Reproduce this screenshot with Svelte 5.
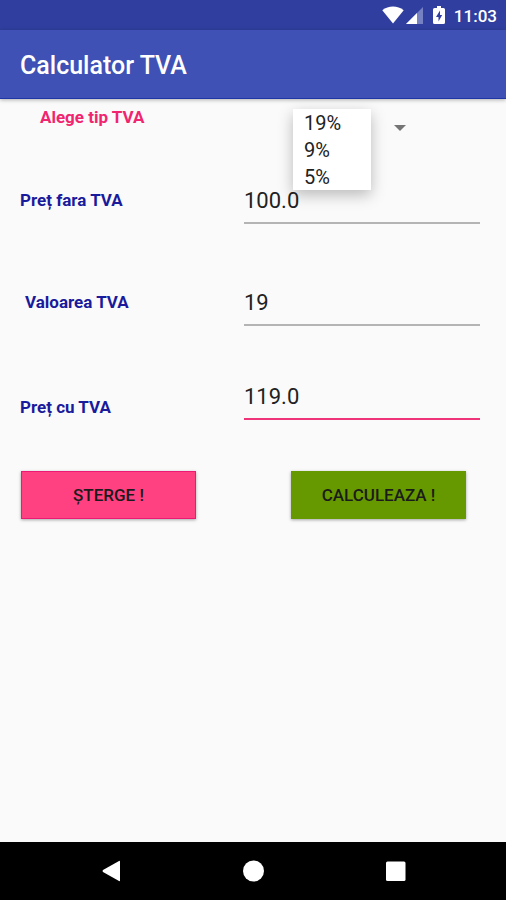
<script>
  const rates = [19, 9, 5];

  let rate = $state(19);
  let net = $state("100.0");
  let tax = $state("19");
  let gross = $state("119.0");
  let open = $state(true);

  function pick(value) {
    rate = value;
    open = false;
  }

  function clear() {
    net = "";
    tax = "";
    gross = "";
  }

  function calculate() {
    const base = parseFloat(net) || 0;
    const vat = (base * rate) / 100;
    tax = String(vat);
    gross = (base + vat).toFixed(1);
  }
</script>

<div class="screen">
  <div class="status">
    <svg class="wifi" viewBox="0 0 22 18" aria-hidden="true">
      <path d="M11 17.5 0.3 4.2C6.4 -0.6 15.6 -0.6 21.7 4.2Z" fill="#fff" />
    </svg>
    <svg class="signal" viewBox="0 0 17 17" aria-hidden="true">
      <path d="M0 17 17 0V17Z" fill="#7681c4" />
      <path d="M0 17 11 6V17Z" fill="#fff" />
    </svg>
    <svg class="battery" viewBox="0 0 12 18" aria-hidden="true">
      <path d="M4 0H8V2H10.5Q12 2 12 3.5V16.5Q12 18 10.5 18H1.5Q0 18 0 16.5V3.5Q0 2 1.5 2H4Z" fill="#fff" />
      <path d="M7 4.5 3 11H5.5V15.5L9.2 9H7Z" fill="#303f9f" />
    </svg>
    <span class="time">11:03</span>
  </div>

  <header>
    <h1>Calculator TVA</h1>
  </header>

  <main>
    <div class="row type">
      <label class="accent" for="rate">Alege tip TVA</label>
      <div class="spinner">
        <select id="rate" bind:value={rate} onclick={() => (open = true)}>
          {#each rates as r}
            <option value={r}>{r}%</option>
          {/each}
        </select>
        <svg class="caret" viewBox="0 0 12 6" aria-hidden="true">
          <path d="M0 0H12L6 6Z" fill="#757575" />
        </svg>
        {#if open}
          <div class="menu">
            {#each rates as r}
              <button type="button" onclick={() => pick(r)}>{r}%</button>
            {/each}
          </div>
        {/if}
      </div>
    </div>

    <div class="row">
      <label for="net">Preț fara TVA</label>
      <input id="net" type="text" bind:value={net} />
    </div>

    <div class="row tax">
      <label class="indent" for="tax">Valoarea TVA</label>
      <input id="tax" type="text" bind:value={tax} />
    </div>

    <div class="row gross">
      <label for="gross">Preț cu TVA</label>
      <input id="gross" class="active" type="text" bind:value={gross} />
    </div>

    <div class="actions">
      <button class="clear" type="button" onclick={clear}>ȘTERGE !</button>
      <button class="calculate" type="button" onclick={calculate}>CALCULEAZA !</button>
    </div>
  </main>

  <nav>
    <button type="button" aria-label="Back">
      <svg viewBox="0 0 22 22" aria-hidden="true">
        <path d="M20 1.5V20.5Q20 21.5 19 21L3 12Q2 11 3 10L19 1Q20 0.5 20 1.5Z" fill="#fff" />
      </svg>
    </button>
    <button type="button" aria-label="Home">
      <svg viewBox="0 0 22 22" aria-hidden="true">
        <circle cx="11.5" cy="11" r="10.5" fill="#fff" />
      </svg>
    </button>
    <button type="button" aria-label="Recent apps">
      <svg viewBox="0 0 22 22" aria-hidden="true">
        <rect x="2" y="1.5" width="19.5" height="19.5" rx="1.5" fill="#fff" />
      </svg>
    </button>
  </nav>
</div>

<style>
  :global(body) {
    margin: 0;
    background: #fafafa;
  }

  .screen {
    display: flex;
    flex-direction: column;
    min-height: 100vh;
    font-family: Roboto, sans-serif;
    background: #fafafa;
  }

  button,
  input,
  select {
    margin: 0;
    padding: 0;
    border: 0;
    border-radius: 0;
    outline: none;
    font-family: inherit;
  }

  .status {
    display: flex;
    align-items: center;
    justify-content: flex-end;
    height: 30px;
    padding-right: 9px;
    background: #303f9f;
  }

  .wifi {
    width: 22px;
    height: 18px;
  }

  .signal {
    width: 17px;
    height: 17px;
    margin-left: 2px;
  }

  .battery {
    width: 12px;
    height: 18px;
    margin: 0 9px 0 10px;
  }

  .time {
    font-size: 17px;
    font-weight: 500;
    line-height: 30px;
    padding-top: 2px;
    color: #fff;
  }

  header {
    padding: 22px 20px 18px;
    background: #3f51b5;
    border-bottom: 1px solid #1f36a5;
    box-shadow: 0 1px 4px rgba(0, 0, 0, 0.3);
  }

  h1 {
    margin: 0;
    font-size: 25px;
    font-weight: 500;
    line-height: 28px;
    color: #fff;
  }

  main {
    flex: 1;
  }

  .row {
    display: grid;
    grid-template-columns: 224fr 236fr;
    padding: 0 26px 0 20px;
  }

  .type {
    padding-top: 8px;
    padding-bottom: 29px;
  }

  .tax {
    margin-top: 56px;
  }

  .gross {
    margin-top: 48px;
  }

  label {
    font-size: 17px;
    font-weight: 700;
    line-height: 44px;
    color: #1a1a9c;
  }

  .accent {
    padding-left: 20px;
    line-height: 20px;
    color: #f0246f;
  }

  .indent {
    padding-left: 5px;
  }

  .gross label {
    padding-top: 11px;
  }

  input {
    box-sizing: border-box;
    width: 100%;
    height: 46px;
    padding-top: 1px;
    font-size: 22px;
    color: #222;
    background: transparent;
    border-bottom: 2px solid #b4b4b4;
  }

  .active {
    border-bottom-color: #f0347a;
  }

  .spinner {
    position: relative;
    display: flex;
    align-items: center;
    justify-self: start;
    width: 114px;
    height: 42px;
    margin-left: 49px;
  }

  select {
    width: 100%;
    height: 32px;
    padding-left: 11px;
    font-size: 20px;
    color: #222;
    appearance: none;
    background: transparent;
  }

  .caret {
    position: absolute;
    right: 1px;
    width: 12px;
    height: 6px;
    pointer-events: none;
  }

  .menu {
    position: absolute;
    top: 2px;
    left: 0;
    z-index: 1;
    display: flex;
    flex-direction: column;
    gap: 1px;
    width: 78px;
    padding-top: 1px;
    background: #fff;
    box-shadow: 0 5px 14px rgba(0, 0, 0, 0.26);
  }

  .menu button {
    height: 26px;
    padding-left: 11px;
    font-size: 20px;
    line-height: 26px;
    text-align: left;
    color: #222;
    background: transparent;
  }

  .actions {
    display: grid;
    grid-template-columns: 1fr 1fr;
    gap: 95px;
    margin-top: 42px;
    padding: 0 40px 0 21px;
  }

  .actions button {
    height: 48px;
    font-size: 17px;
    font-weight: 500;
    color: #1b1b1b;
    box-shadow: 0 1px 3px rgba(0, 0, 0, 0.35);
  }

  .actions .clear {
    background: #ff4081;
    border: 1px solid #ec1a72;
  }

  .actions .calculate {
    background: #669900;
  }

  nav {
    display: flex;
    justify-content: center;
    gap: 98px;
    padding: 7px 0;
    background: #000;
  }

  nav button {
    display: flex;
    align-items: center;
    justify-content: center;
    width: 44px;
    height: 44px;
    background: transparent;
  }

  nav svg {
    width: 22px;
    height: 22px;
  }
</style>
